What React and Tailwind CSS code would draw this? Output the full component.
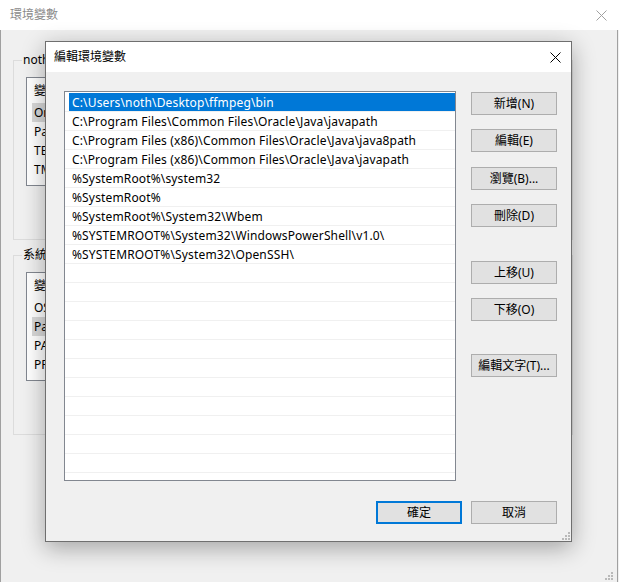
import React from "react";

const FONT = { fontFamily: '"Noto Sans", "Noto Sans CJK TC", sans-serif' };

const paths = [
  "C:\\Users\\noth\\Desktop\\ffmpeg\\bin",
  "C:\\Program Files\\Common Files\\Oracle\\Java\\javapath",
  "C:\\Program Files (x86)\\Common Files\\Oracle\\Java\\java8path",
  "C:\\Program Files (x86)\\Common Files\\Oracle\\Java\\javapath",
  "%SystemRoot%\\system32",
  "%SystemRoot%",
  "%SystemRoot%\\System32\\Wbem",
  "%SYSTEMROOT%\\System32\\WindowsPowerShell\\v1.0\\",
  "%SYSTEMROOT%\\System32\\OpenSSH\\",
];

function Grip() {
  const dots = [
    [6, 0],
    [3, 3],
    [6, 3],
    [0, 6],
    [3, 6],
    [6, 6],
  ];
  return (
    <svg width="8" height="8" viewBox="0 0 8 8">
      {dots.map(([x, y], i) => (
        <rect key={i} x={x} y={y} width="2" height="2" fill="#b9b9b9" />
      ))}
    </svg>
  );
}

function CloseX({ color, size = 10 }) {
  return (
    <svg width={size + 1} height={size + 1} viewBox={`0 0 ${size + 1} ${size + 1}`}>
      <path d={`M0.5 0.5 L${size + 0.5} ${size + 0.5} M${size + 0.5} 0.5 L0.5 ${size + 0.5}`} stroke={color} strokeWidth="1" />
    </svg>
  );
}

function Btn({ children, primary, className = "" }) {
  return (
    <div
      className={`w-[86px] h-[23px] flex items-center justify-center text-[12px] text-black bg-[#e1e1e1] ${
        primary ? "border-2 border-[#0078d7]" : "border border-[#adadad]"
      } ${className}`}
    >
      {children}
    </div>
  );
}

function VarGroup({ legend, rows, highlight, className = "" }) {
  return (
    <div className={`relative ml-[12px] w-[560px] h-[180px] border border-[#dcdcdc] ${className}`}>
      <span className="absolute left-[8px] top-[-10px] px-[1px] bg-[#f0f0f0] text-[12px] text-black leading-[18px]">
        {legend}
      </span>
      <div className="ml-[12px] mt-[16px] w-[420px] h-[109px] border border-[#828790] bg-white">
        <div className="h-[25px] flex items-center pl-[7px] text-[12px] text-black">變數</div>
        {rows.map((r, i) => (
          <div key={i} className="h-[19px] flex items-stretch">
            <div
              className={`ml-[5px] pl-[2px] w-[200px] flex items-center text-[12px] text-black ${
                i === highlight ? "bg-[#d9d9d9]" : ""
              }`}
            >
              {r}
            </div>
          </div>
        ))}
      </div>
    </div>
  );
}

export default function App() {
  const rowCount = 21;
  return (
    <div className="relative w-[619px] h-[582px] overflow-hidden bg-[#f0f0f0] flex flex-col" style={FONT}>
      {/* background window title bar */}
      <div className="h-[30px] bg-white flex items-center justify-between pl-[10px] pr-[12px] shrink-0">
        <span className="text-[12px] text-[#8a8a8a]">環境變數</span>
        <CloseX color="#a0a0a0" size={10} />
      </div>
      {/* background window body */}
      <div className="relative flex-1 w-[618px] border-l border-r border-[#a0a0a0] pt-[30px]">
        <VarGroup
          legend="noth 的使用者變數(U)"
          rows={["OneDrive", "Path", "TEMP", "TMP"]}
          highlight={0}
        />
        <VarGroup
          legend="系統變數(S)"
          rows={["OS", "Path", "PATHEXT", "PROCESSOR_ARCHITECTURE"]}
          highlight={1}
          className="mt-[15px]"
        />
        <div className="absolute right-[4px] bottom-[2px]">
          <Grip />
        </div>
      </div>

      {/* dialog */}
      <div className="absolute left-[45px] top-[41px] w-[527px] h-[501px] border border-[#6f6f6f] bg-[#f0f0f0] flex flex-col shadow-[0_6px_22px_rgba(0,0,0,0.32)]">
        <div className="h-[30px] bg-white flex items-center justify-between pl-[8px] pr-[10px] shrink-0">
          <span className="text-[12px] text-black">編輯環境變數</span>
          <CloseX color="#000" size={10} />
        </div>
        <div className="flex pl-[18px] pr-[14px] pt-[19px]">
          <div className="w-[392px] h-[390px] border border-[#828790] bg-white pt-[1px] overflow-hidden">
            {Array.from({ length: rowCount }).map((_, i) => {
              const text = paths[i];
              const sel = i === 0;
              return (
                <div key={i} className="h-[19px] border-b border-[#f0f0f0] flex items-stretch">
                  {sel ? (
                    <div className="ml-[4px] flex-1 bg-[#0078d7] pl-[3px] pt-[1px] flex items-center text-[12px] tracking-[0.15px] text-white whitespace-nowrap">
                      {text}
                    </div>
                  ) : (
                    <div className="pl-[7px] pt-[1px] flex items-center text-[12px] tracking-[0.15px] text-black whitespace-nowrap">
                      {text}
                    </div>
                  )}
                </div>
              );
            })}
          </div>
          <div className="ml-[15px] flex flex-col pt-[1px]">
            <Btn>新增(N)</Btn>
            <Btn className="mt-[14px]">編輯(E)</Btn>
            <Btn className="mt-[15px]">瀏覽(B)...</Btn>
            <Btn className="mt-[14px]">刪除(D)</Btn>
            <Btn className="mt-[34px]">上移(U)</Btn>
            <Btn className="mt-[14px]">下移(O)</Btn>
            <Btn className="mt-[33px]">編輯文字(T)...</Btn>
          </div>
        </div>
        <div className="flex justify-end gap-[9px] pr-[14px] mt-[20px]">
          <Btn primary>確定</Btn>
          <Btn>取消</Btn>
        </div>
        <div className="absolute right-[1px] bottom-[1px]">
          <Grip />
        </div>
      </div>
    </div>
  );
}
